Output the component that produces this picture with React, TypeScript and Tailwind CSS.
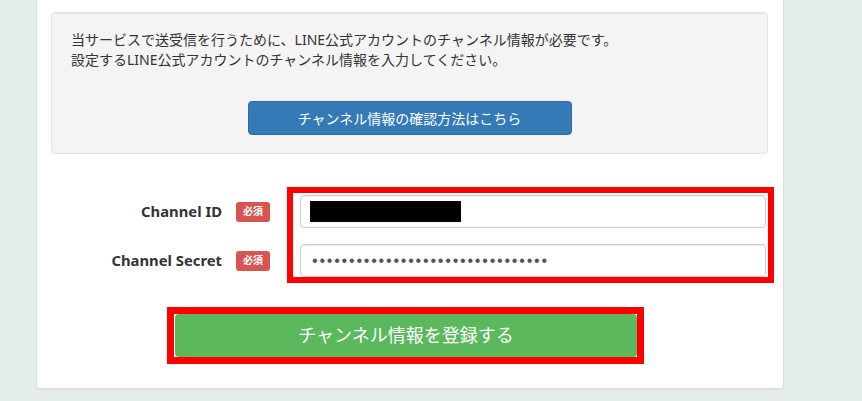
import React from "react";

const font = { fontFamily: '"Noto Sans", "Noto Sans CJK JP", sans-serif' };

function Required() {
  return (
    <span className="ml-[14px] flex h-[20px] w-[34px] items-center justify-center rounded-[3px] bg-[#d9534f] text-[10px] font-bold text-white">
      必須
    </span>
  );
}

export default function App() {
  return (
    <div className="h-[401px] w-[862px] overflow-hidden bg-[#e4ede8]" style={font}>
      <div className="ml-[36px] w-[748px] rounded-b-[4px] border border-t-0 border-[#dadfdc] bg-white pb-[31px] pl-[14px] pr-[15px] pt-[12px] shadow-[0_1px_1px_rgba(0,0,0,0.05)]">
        {/* 説明エリア */}
        <div className="rounded-[4px] border border-[#e3e3e3] bg-[#f4f4f5] pb-[18px] pl-[19px] pt-[17px] shadow-[inset_0_1px_1px_rgba(0,0,0,0.05)]">
          <p className="text-[14px] leading-[20px] text-[#333]">
            当サービスで送受信を行うために、LINE公式アカウントのチャンネル情報が必要です。
            <br />
            設定するLINE公式アカウントのチャンネル情報を入力してください。
          </p>
          <div className="mt-[31px] flex justify-center pr-[19px]">
            <button className="h-[34px] w-[324px] rounded-[4px] border border-[#2e6da4] bg-[#337ab7] text-[14px] text-white">
              チャンネル情報の確認方法はこちら
            </button>
          </div>
        </div>

        {/* フォーム */}
        <div className="mt-[41px] flex">
          <div className="flex w-[219px] flex-col gap-[16px]">
            <div className="flex h-[33px] items-center justify-end">
              <span className="text-[14.8px] font-bold text-[#333]">Channel ID</span>
              <Required />
            </div>
            <div className="flex h-[33px] items-center justify-end">
              <span className="text-[14.8px] font-bold text-[#333]">Channel Secret</span>
              <Required />
            </div>
          </div>
          <div className="relative ml-[30px] flex w-[466px] flex-col gap-[16px]">
            <div className="flex h-[33px] items-center rounded-[4px] border border-[#ccc] bg-white px-[9px] shadow-[inset_0_1px_1px_rgba(0,0,0,0.075)]">
              <div className="h-[21px] w-[151px] bg-black" />
            </div>
            <div className="flex h-[33px] items-center rounded-[4px] border border-[#ccc] bg-white px-[11px] shadow-[inset_0_1px_1px_rgba(0,0,0,0.075)]">
              <span
                className="text-[16px] leading-none tracking-[1.8px] text-[#555]"
                style={{ fontFamily: '"Liberation Sans", sans-serif' }}
              >
                ••••••••••••••••••••••••••••••••
              </span>
            </div>
            <div className="pointer-events-none absolute -bottom-[6px] -left-[13px] -right-[8px] -top-[8px] border-[6px] border-[#ff0000]" />
          </div>
        </div>

        <div className="relative ml-[124px] mt-[37px] w-[462px]">
          <button className="h-[43px] w-full rounded-[4px] bg-[#5cb85c] text-[18px] text-white">
            チャンネル情報を登録する
          </button>
          <div className="pointer-events-none absolute -bottom-[7px] -left-[8px] -right-[7px] -top-[7px] border-[7px] border-[#ff0000]" />
        </div>
      </div>
    </div>
  );
}
